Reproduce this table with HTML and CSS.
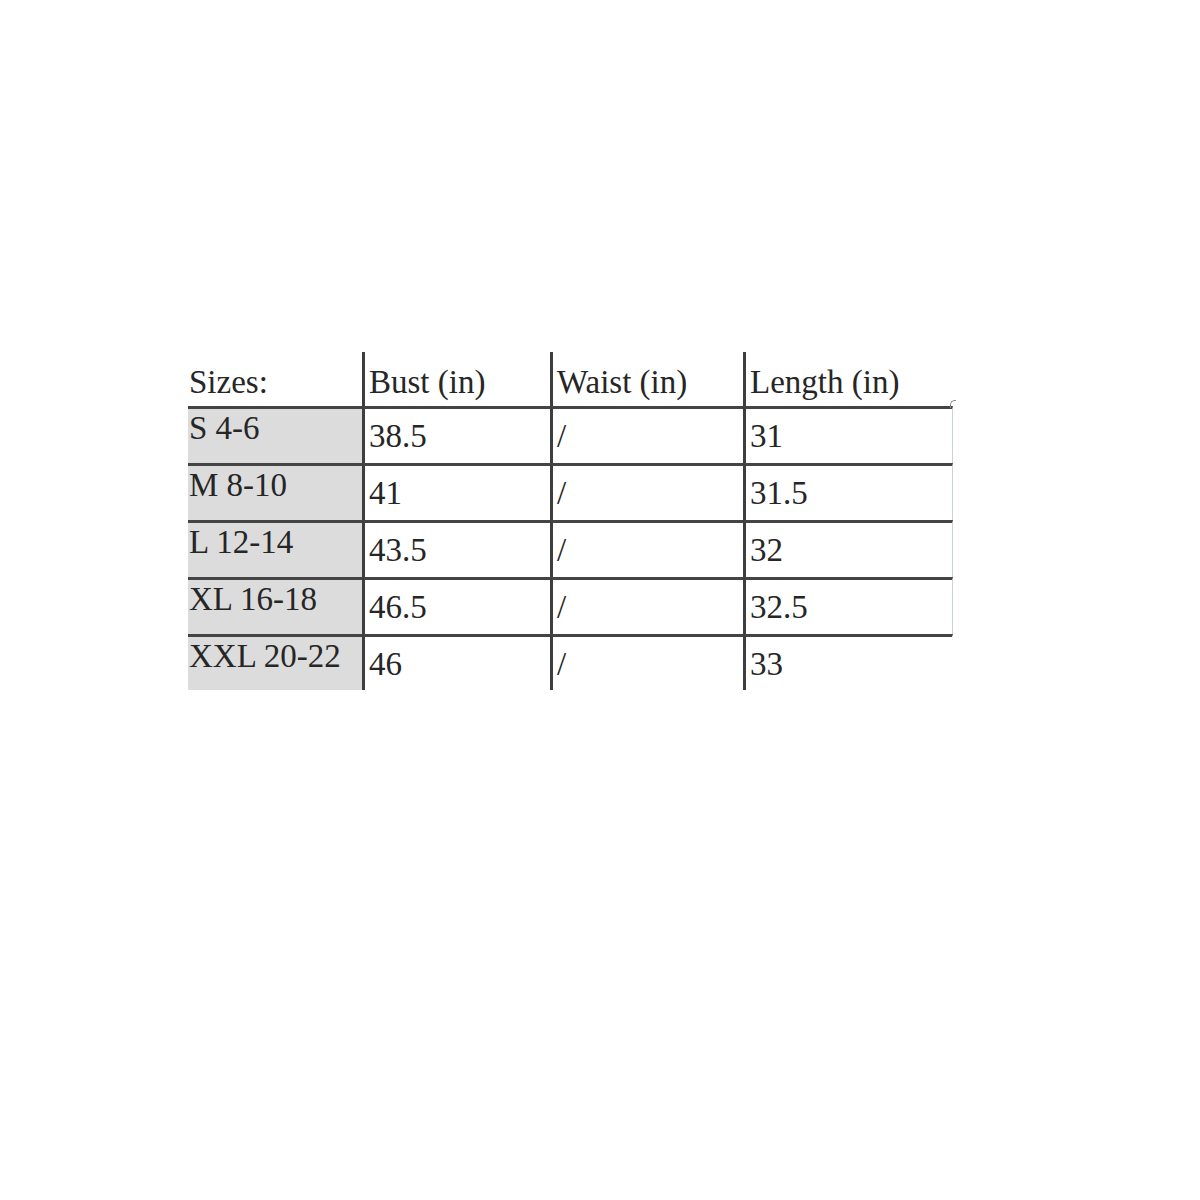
FILE: index.html
```html
<!DOCTYPE html>
<html>
<head>
<meta charset="utf-8">
<link rel="stylesheet" href="styles.css">
</head>
<body>
<div class="page">
  <table class="sizes">
    <thead>
      <tr class="head">
        <th class="c1">Sizes:</th>
        <th class="c2">Bust (in)</th>
        <th class="c3">Waist (in)</th>
        <th class="c4 curl">Length (in)</th>
      </tr>
    </thead>
    <tbody>
      <tr>
        <td class="c1">S 4-6</td>
        <td class="c2">38.5</td>
        <td class="c3">/</td>
        <td class="c4 edge">31</td>
      </tr>
      <tr>
        <td class="c1">M 8-10</td>
        <td class="c2">41</td>
        <td class="c3">/</td>
        <td class="c4 edge">31.5</td>
      </tr>
      <tr>
        <td class="c1">L 12-14</td>
        <td class="c2">43.5</td>
        <td class="c3">/</td>
        <td class="c4 edge">32</td>
      </tr>
      <tr>
        <td class="c1">XL 16-18</td>
        <td class="c2">46.5</td>
        <td class="c3">/</td>
        <td class="c4 edge">32.5</td>
      </tr>
      <tr class="last">
        <td class="c1">XXL 20-22</td>
        <td class="c2">46</td>
        <td class="c3">/</td>
        <td class="c4">33</td>
      </tr>
    </tbody>
  </table>
</div>
</body>
</html>
```
FILE: styles.css
```css
html, body {
  margin: 0;
  padding: 0;
  background: #ffffff;
}

.page {
  padding: 352px 0 0 188px;
}

.sizes {
  border-collapse: separate;
  border-spacing: 0;
  font-family: "Liberation Serif", "Times New Roman", serif;
  font-size: 33px;
  line-height: 33px;
  color: #262626;
}

.sizes th,
.sizes td {
  box-sizing: border-box;
  padding: 0;
  text-align: left;
  vertical-align: top;
  font-weight: normal;
  white-space: nowrap;
}

.sizes .c2,
.sizes .c3,
.sizes .c4 {
  border-left: 3px solid #3e3e3e;
  padding-left: 4px;
}

.sizes .c1 { width: 174px; padding-left: 1px; }
.sizes .c2 { width: 188px; }
.sizes .c3 { width: 193px; }
.sizes .c4 { width: 210px; }

.head th {
  height: 54px;
  padding-top: 14px;
}

.sizes th.curl {
  position: relative;
}

.sizes th.curl::after {
  content: "";
  position: absolute;
  right: -3px;
  bottom: -2px;
  width: 5px;
  height: 7px;
  border-left: 1px solid #8a8a8a;
  border-top: 1px solid #8a8a8a;
  border-top-left-radius: 5px;
}

.sizes tbody td {
  height: 57px;
  border-top: 3px solid #444444;
  padding-top: 11px;
}

.sizes tbody td.c1 {
  background: #dcdcdc;
  padding-top: 3px;
}

.sizes tbody td.edge {
  border-right: 1px solid #c9d3d9;
}

.sizes tbody td.c4:not(.edge) {
  border-right: 1px solid transparent;
}

.sizes tr.last td {
  height: 56px;
}
```
